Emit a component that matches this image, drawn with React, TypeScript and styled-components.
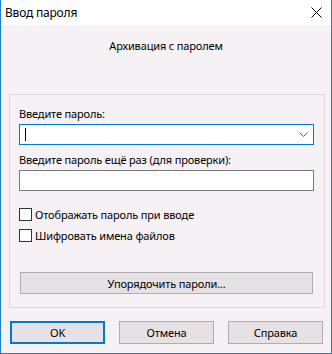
import styled, { createGlobalStyle } from 'styled-components';

const GlobalStyle = createGlobalStyle`
  html, body {
    margin: 0;
    padding: 0;
    background: #ffffff;
  }
  * {
    box-sizing: border-box;
  }
`;

const Window = styled.div`
  width: 332px;
  height: 354px;
  display: flex;
  flex-direction: column;
  border-left: 1px solid #1a7fd4;
  border-right: 1px solid #1a7fd4;
  border-bottom: 1px solid #1a7fd4;
  font-family: "Noto Sans", "Liberation Sans", sans-serif;
  font-size: 11px;
  letter-spacing: -0.15px;
  color: #000000;
`;

const TitleBar = styled.div`
  height: 25px;
  flex: none;
  display: flex;
  align-items: center;
  justify-content: space-between;
  background: #ffffff;
  padding-left: 4px;
  padding-right: 9px;
`;

const TitleText = styled.span`
  font-size: 12px;
  letter-spacing: -0.2px;
  line-height: 16px;
`;

const CloseIcon = styled.svg`
  display: block;
  width: 11px;
  height: 11px;
`;

const Body = styled.div`
  flex: 1;
  display: flex;
  flex-direction: column;
  background: #f5f1f5;
`;

const Heading = styled.div`
  margin-top: 13px;
  line-height: 16px;
  text-align: center;
`;

const GroupBox = styled.div`
  margin: 40px 0 0 8px;
  width: 316px;
  border: 1px solid #dcd8dc;
  padding: 11px 9px 13px 9px;
  display: flex;
  flex-direction: column;
`;

const FieldLabel = styled.label<{ $gapTop?: number }>`
  display: block;
  line-height: 16px;
  margin-top: ${p => p.$gapTop ?? 0}px;
  margin-bottom: 2px;
`;

const InputBox = styled.div<{ $focused?: boolean }>`
  width: 295px;
  height: 21px;
  background: #ffffff;
  border: 1px solid ${p => (p.$focused ? '#0078d7' : '#7a7a7a')};
  display: flex;
  align-items: center;
  justify-content: space-between;
  padding: 0 5px 0 5px;
`;

const Caret = styled.span`
  display: block;
  width: 1px;
  height: 13px;
  background: #000000;
`;

const Chevron = styled.svg`
  display: block;
  width: 9px;
  height: 5px;
`;

const CheckRow = styled.div<{ $gapTop: number }>`
  display: flex;
  align-items: center;
  height: 16px;
  margin-top: ${p => p.$gapTop}px;
`;

const CheckBox = styled.span`
  display: block;
  width: 13px;
  height: 13px;
  background: #ffffff;
  border: 1px solid #333333;
  margin-right: 3px;
`;

const WideButton = styled.div`
  margin: 29px 0 0 1px;
  width: 293px;
  height: 22px;
  background: #e5e1e5;
  border: 1px solid #adadad;
  display: flex;
  align-items: center;
  justify-content: center;
`;

const ButtonRow = styled.div`
  display: flex;
  gap: 14px;
  margin: 13px 0 0 9px;
`;

const DialogButton = styled.div<{ $primary?: boolean }>`
  width: 95px;
  height: 23px;
  background: #e5e1e5;
  border: ${p => (p.$primary ? '2px solid #0078d7' : '1px solid #adadad')};
  display: flex;
  align-items: center;
  justify-content: center;
`;

export default function App() {
  return (
    <>
      <GlobalStyle />
      <Window>
        <TitleBar>
          <TitleText>Ввод пароля</TitleText>
          <CloseIcon viewBox="0 0 11 11">
            <path d="M0.5 0.5 L10.5 10.5 M10.5 0.5 L0.5 10.5" stroke="#000" strokeWidth="1" fill="none" />
          </CloseIcon>
        </TitleBar>
        <Body>
          <Heading>Архивация с паролем</Heading>
          <GroupBox>
            <FieldLabel>Введите пароль:</FieldLabel>
            <InputBox $focused>
              <Caret />
              <Chevron viewBox="0 0 9 5">
                <path d="M0.5 0.5 L4.5 4.5 L8.5 0.5" stroke="#606060" strokeWidth="1" fill="none" />
              </Chevron>
            </InputBox>
            <FieldLabel $gapTop={7}>Введите пароль ещё раз (для проверки):</FieldLabel>
            <InputBox />
            <CheckRow $gapTop={15}>
              <CheckBox />
              Отображать пароль при вводе
            </CheckRow>
            <CheckRow $gapTop={5}>
              <CheckBox />
              Шифровать имена файлов
            </CheckRow>
            <WideButton>Упорядочить пароли...</WideButton>
          </GroupBox>
          <ButtonRow>
            <DialogButton $primary>OK</DialogButton>
            <DialogButton>Отмена</DialogButton>
            <DialogButton>Справка</DialogButton>
          </ButtonRow>
        </Body>
      </Window>
    </>
  );
}
